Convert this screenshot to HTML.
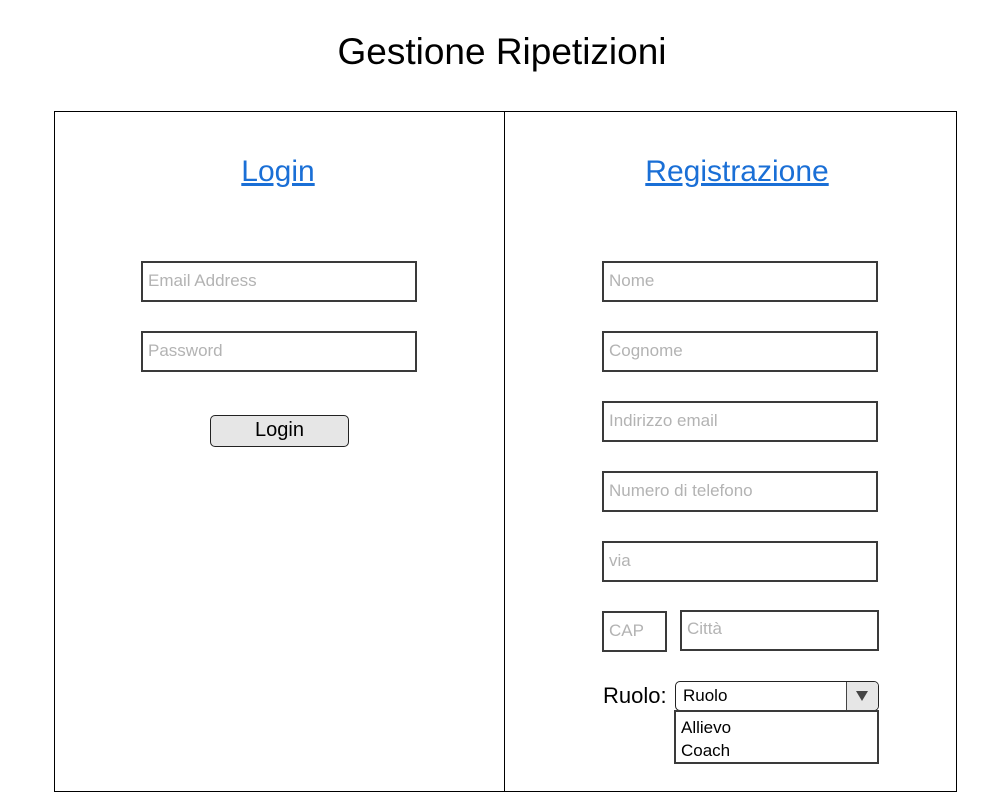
<!DOCTYPE html>
<html><head><meta charset="utf-8"><style>
body{margin:0;width:1008px;height:801px;background:#fff;font-family:"Liberation Sans",Arial,sans-serif;position:relative;overflow:hidden}
div{position:absolute;box-sizing:border-box}
.t{white-space:nowrap}
.in{border:2px solid #3a3a3a;background:#fff;color:#b3b3b3;font-size:17px;padding-left:5px;line-height:36px;width:276px;height:41px}
.lk{color:#1a6fd6;text-decoration:underline;font-size:30px;text-align:center}
</style></head><body>
<div class="t" style="left:0;width:1004px;top:31px;text-align:center;font-size:37px;color:#000">Gestione Ripetizioni</div>
<div style="left:54px;top:111px;width:903px;height:681px;border:1px solid #000"></div>
<div style="left:504px;top:111px;width:1px;height:681px;background:#000"></div>
<div class="t lk" style="left:178px;width:200px;top:155px">Login</div>
<div class="t lk" style="left:587px;width:300px;top:155px">Registrazione</div>
<div class="in" style="left:141px;top:261px">Email Address</div>
<div class="in" style="left:141px;top:331px">Password</div>
<div style="left:210px;top:415px;width:139px;height:32px;border:1.5px solid #222;border-radius:5px;background:#e6e6e6;text-align:center;font-size:20px;line-height:29px">Login</div>
<div class="in" style="left:602px;top:261px">Nome</div>
<div class="in" style="left:602px;top:331px">Cognome</div>
<div class="in" style="left:602px;top:401px">Indirizzo email</div>
<div class="in" style="left:602px;top:471px">Numero di telefono</div>
<div class="in" style="left:602px;top:541px">via</div>
<div class="in" style="left:602px;top:611px;width:65px">CAP</div>
<div class="in" style="left:680px;top:610px;width:199px;line-height:34px">Città</div>
<div class="t" style="left:603px;top:683px;font-size:22px">Ruolo:</div>
<div style="left:675px;top:681px;width:204px;height:30px;border:1.5px solid #222;border-radius:5px;background:#fff;overflow:hidden;font-size:17px;line-height:27px;padding-left:7px">Ruolo
<div style="left:170px;top:0;width:33px;height:28px;background:#e6e6e6;border-left:1.5px solid #444"><svg width="32" height="28" style="position:absolute;left:0;top:0"><path d="M9 9 L21 9 L15 19 Z" fill="#444"/></svg></div></div>
<div style="left:674px;top:710px;width:205px;height:54px;border:2px solid #3a3a3a;background:#fff;font-size:17px;line-height:23px;padding:4px 0 0 5px">Allievo<br>Coach</div>
</body></html>
